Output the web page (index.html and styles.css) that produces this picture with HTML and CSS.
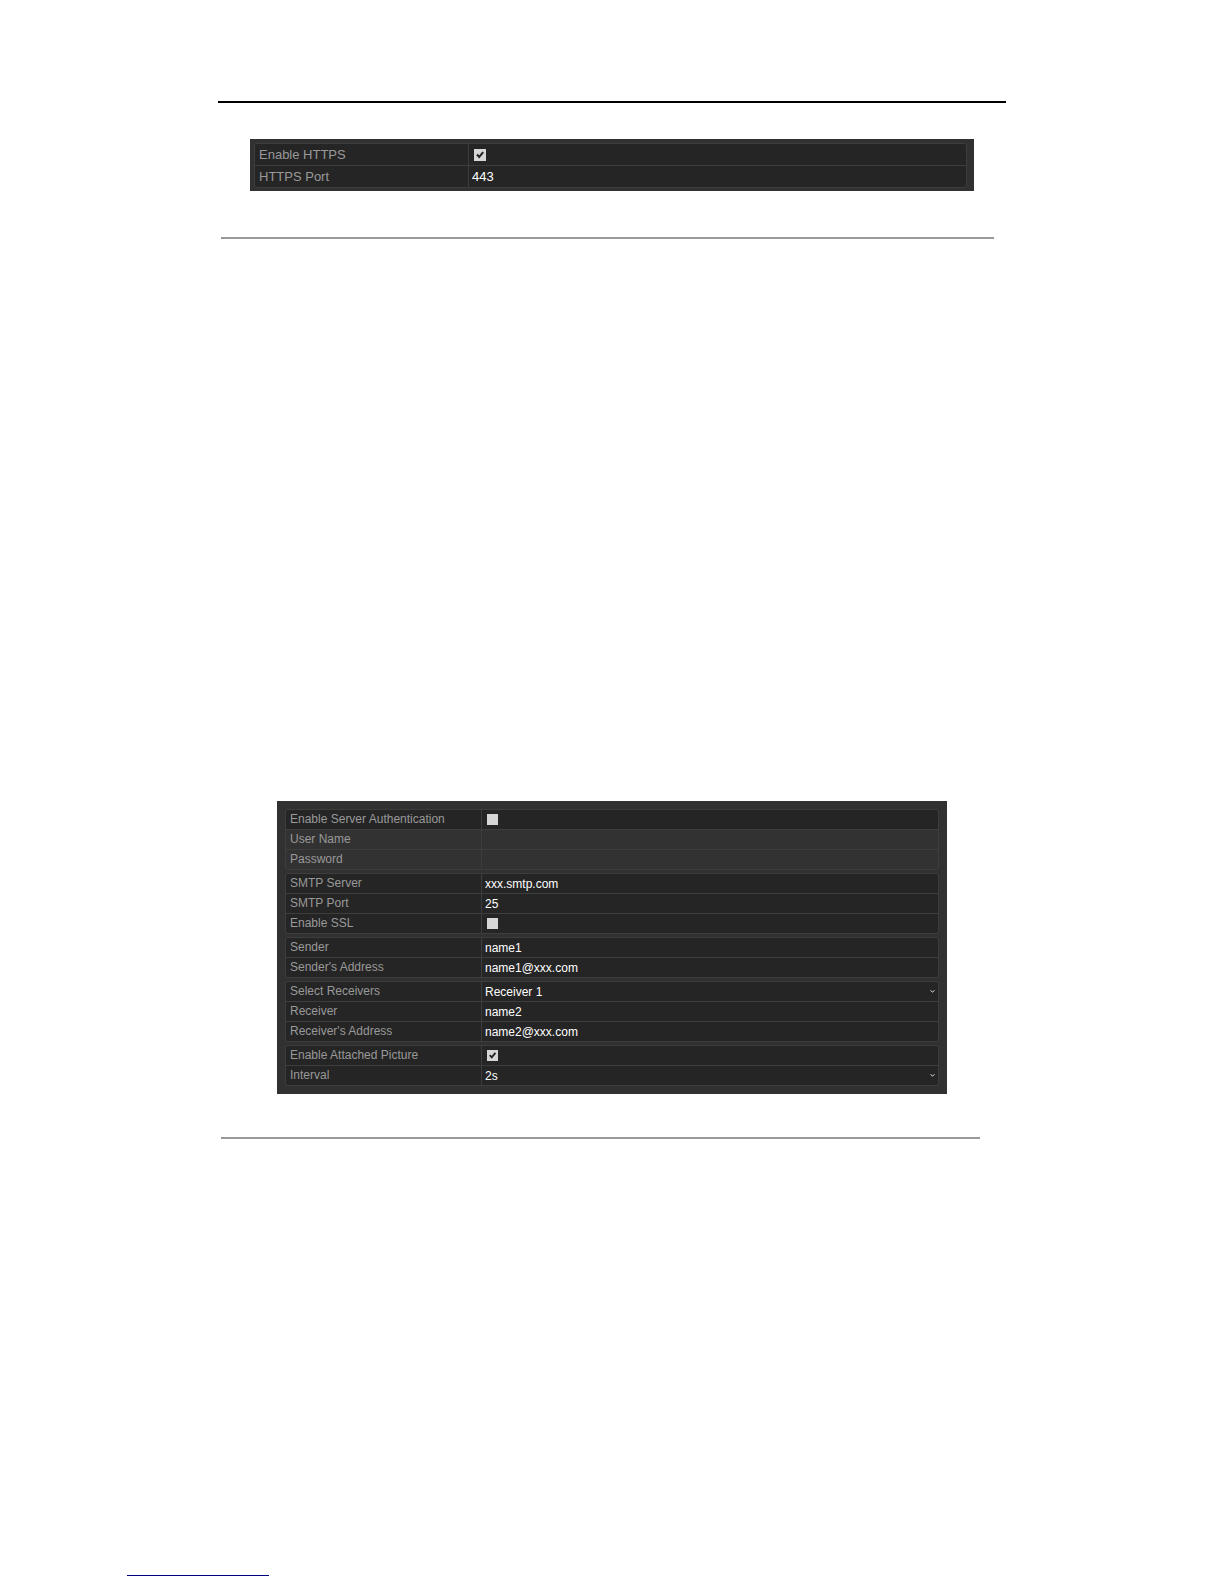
FILE: index.html
```html
<!DOCTYPE html>
<html lang="en">
<head>
<meta charset="utf-8">
<meta name="viewport" content="width=device-width, initial-scale=1">
<title>Network Settings</title>
<link rel="stylesheet" href="styles.css">
</head>
<body>
<main class="page">
  <hr class="rule rule-top">

  <form class="panel panel-https">
    <div class="group">
      <div class="row">
        <label class="name" for="https">Enable HTTPS</label>
        <div class="value tick"><input class="box" type="checkbox" id="https" checked><svg class="mark" viewBox="0 0 12 12" aria-hidden="true"><path d="M3 5.5L5.2 8L9.2 3.2"/></svg></div>
      </div>
      <div class="row">
        <label class="name" for="port">HTTPS Port</label>
        <div class="value"><input class="field" type="text" id="port" value="443"></div>
      </div>
    </div>
  </form>

  <hr class="rule rule-end">

  <form class="panel panel-email">
    <div class="group">
      <div class="row">
        <label class="name" for="auth">Enable Server Authentication</label>
        <div class="value tick"><input class="box" type="checkbox" id="auth"></div>
      </div>
      <div class="row off">
        <label class="name" for="user">User Name</label>
        <div class="value"><input class="field" type="text" id="user" disabled></div>
      </div>
      <div class="row off">
        <label class="name" for="pass">Password</label>
        <div class="value"><input class="field" type="password" id="pass" disabled></div>
      </div>
    </div>
    <div class="group">
      <div class="row">
        <label class="name" for="server">SMTP Server</label>
        <div class="value"><input class="field" type="text" id="server" value="xxx.smtp.com"></div>
      </div>
      <div class="row">
        <label class="name" for="smtp-port">SMTP Port</label>
        <div class="value"><input class="field" type="text" id="smtp-port" value="25"></div>
      </div>
      <div class="row">
        <label class="name" for="ssl">Enable SSL</label>
        <div class="value tick"><input class="box" type="checkbox" id="ssl"></div>
      </div>
    </div>
    <div class="group">
      <div class="row">
        <label class="name" for="sender">Sender</label>
        <div class="value"><input class="field" type="text" id="sender" value="name1"></div>
      </div>
      <div class="row">
        <label class="name" for="sender-address">Sender's Address</label>
        <div class="value"><input class="field" type="text" id="sender-address" value="name1@xxx.com"></div>
      </div>
    </div>
    <div class="group">
      <div class="row">
        <label class="name" for="receivers">Select Receivers</label>
        <div class="value"><select class="field" id="receivers"><option>Receiver 1</option></select><svg class="arrow" viewBox="0 0 5 3" aria-hidden="true"><path d="M0.5 0.5L2.5 2L4.5 0.5"/></svg></div>
      </div>
      <div class="row">
        <label class="name" for="receiver">Receiver</label>
        <div class="value"><input class="field" type="text" id="receiver" value="name2"></div>
      </div>
      <div class="row">
        <label class="name" for="receiver-address">Receiver's Address</label>
        <div class="value"><input class="field" type="text" id="receiver-address" value="name2@xxx.com"></div>
      </div>
    </div>
    <div class="group">
      <div class="row">
        <label class="name" for="picture">Enable Attached Picture</label>
        <div class="value tick"><input class="box" type="checkbox" id="picture" checked><svg class="mark" viewBox="0 0 12 12" aria-hidden="true"><path d="M3 5.5L5.2 8L9.2 3.2"/></svg></div>
      </div>
      <div class="row">
        <label class="name" for="interval">Interval</label>
        <div class="value"><select class="field" id="interval"><option>2s</option></select><svg class="arrow" viewBox="0 0 5 3" aria-hidden="true"><path d="M0.5 0.5L2.5 2L4.5 0.5"/></svg></div>
      </div>
    </div>
  </form>

  <hr class="rule rule-end rule-short">
</main>
<footer class="footer"><hr class="rule rule-link"></footer>
</body>
</html>
```
FILE: styles.css
```css
* {
  box-sizing: border-box;
}

body {
  display: flex;
  flex-direction: column;
  justify-content: space-between;
  min-height: 100vh;
  margin: 0;
  background: #fff;
  font-family: "Liberation Sans", Arial, sans-serif;
}

.page {
  width: 100%;
  max-width: 788px;
  margin: 0 auto;
  padding-top: 101px;
}

.rule {
  height: 2px;
  margin: 0;
  border: 0;
  background: #999;
}

.rule-top {
  background: #000;
}

.rule-end {
  margin: 46px 12px 0 3px;
}

.rule-short {
  margin-top: 43px;
  margin-right: 26px;
}

.panel {
  display: flex;
  flex-direction: column;
  gap: 3px;
  margin: 0 auto;
  background: #313131;
}

.panel-https {
  --name-width: 214px;
  --row-height: 21px;
  --box-size: 12px;
  max-width: 724px;
  margin-top: 36px;
  padding: 4px 7px 3px 4px;
  font-size: 13px;
}

.panel-email {
  --name-width: 196px;
  --row-height: 19px;
  --box-size: 11px;
  max-width: 670px;
  margin-top: 562px;
  padding: 8px;
  font-size: 12px;
}

.group {
  display: flex;
  flex-direction: column;
  gap: 1px;
  border: 1px solid #3d3d3d;
  border-radius: 3px;
  background: #3d3d3d;
  overflow: hidden;
}

.row {
  display: grid;
  grid-template-columns: var(--name-width) 1fr;
  height: var(--row-height);
  background: #252525;
}

.off {
  background: #323232;
}

.name {
  padding-left: 4px;
  border-right: 1px solid #3d3d3d;
  color: #999;
  line-height: var(--row-height);
}

.value {
  display: grid;
  grid-template-columns: 1fr;
  align-items: center;
  padding-left: 3px;
}

.tick {
  padding-left: 5px;
}

.value > * {
  grid-area: 1 / 1;
}

.field {
  appearance: none;
  width: 100%;
  min-width: 0;
  height: var(--row-height);
  margin: 0;
  padding: 0;
  border: 0;
  background: transparent;
  color: #fff;
  font: inherit;
}

.box {
  appearance: none;
  width: var(--box-size);
  height: var(--box-size);
  margin: 0;
  background: #d6d6d6;
}

.mark {
  width: var(--box-size);
  height: var(--box-size);
  fill: none;
  stroke: #222;
  stroke-width: 2;
  pointer-events: none;
}

.arrow {
  justify-self: end;
  width: 5px;
  height: 3px;
  margin-right: 3px;
  fill: none;
  stroke: #ddd;
  pointer-events: none;
}

.footer {
  padding: 0 127px 8px;
}

.rule-link {
  width: 142px;
  height: 1px;
  background: #000080;
}
```
